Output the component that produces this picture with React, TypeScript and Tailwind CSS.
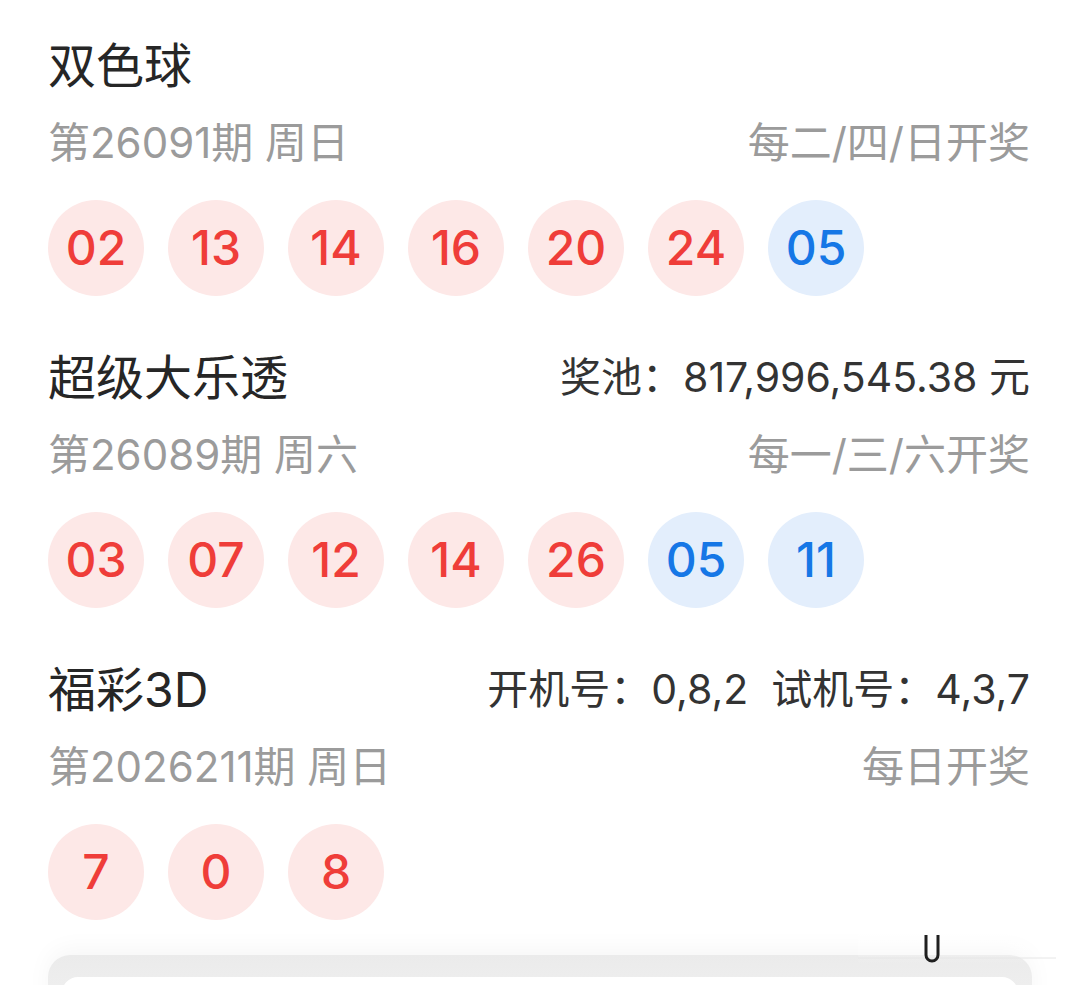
import React from 'react'

type Ball = { n: string; blue?: boolean }

type Draw = {
  name: string
  extra?: string
  issue: string
  schedule: string
  balls: Ball[]
}

const draws: Draw[] = [
  {
    name: '双色球',
    issue: '第26091期 周日',
    schedule: '每二/四/日开奖',
    balls: [
      { n: '02' },
      { n: '13' },
      { n: '14' },
      { n: '16' },
      { n: '20' },
      { n: '24' },
      { n: '05', blue: true },
    ],
  },
  {
    name: '超级大乐透',
    extra: '奖池：817,996,545.38 元',
    issue: '第26089期 周六',
    schedule: '每一/三/六开奖',
    balls: [
      { n: '03' },
      { n: '07' },
      { n: '12' },
      { n: '14' },
      { n: '26' },
      { n: '05', blue: true },
      { n: '11', blue: true },
    ],
  },
  {
    name: '福彩3D',
    extra: '开机号：0,8,2  试机号：4,3,7',
    issue: '第2026211期 周日',
    schedule: '每日开奖',
    balls: [{ n: '7' }, { n: '0' }, { n: '8' }],
  },
]

const font = { fontFamily: '"Inter", "Noto Sans CJK SC", sans-serif' }

function NumberBall({ n, blue }: Ball) {
  return (
    <div
      className={`w-[96px] h-[96px] rounded-full flex items-center justify-center text-[48px] font-medium ${
        blue ? 'bg-[#e3eefc] text-[#1677e6]' : 'bg-[#fde8e7] text-[#ef3d39]'
      }`}
    >
      {n}
    </div>
  )
}

function DrawBlock({ name, extra, issue, schedule, balls }: Draw) {
  return (
    <section>
      <div className="flex items-center justify-between h-[60px]">
        <h2 className="text-[48px] text-[#262626] whitespace-pre">{name}</h2>
        {extra && (
          <span className="text-[41px] text-[#333333] whitespace-pre">{extra}</span>
        )}
      </div>
      <div className="flex items-center justify-between h-[50px] mt-[21px] text-[42px] text-[#9b9b9b]">
        <span>{issue}</span>
        <span>{schedule}</span>
      </div>
      <div className="flex gap-[24px] mt-[33px]">
        {balls.map((b, i) => (
          <NumberBall key={i} {...b} />
        ))}
      </div>
    </section>
  )
}

export default function App() {
  return (
    <div className="relative w-[1080px] h-[985px] overflow-hidden bg-white" style={font}>
      <div className="pl-[48px] pr-[50px] pt-[36px] flex flex-col gap-[52px]">
        {draws.map((d) => (
          <DrawBlock key={d.name} {...d} />
        ))}
      </div>

      {/* next card peeking in at the bottom */}
      <div className="mx-[48px] mt-[35px] h-[80px] rounded-t-[22px] bg-gradient-to-b from-[#ebebeb] to-[#f3f3f3] shadow-[0_-6px_24px_rgba(0,0,0,0.04)] px-[14px] pt-[22px]">
        <div className="h-full rounded-t-[16px] bg-white" />
      </div>

      {/* scroll grip */}
      <div className="absolute left-[858px] top-[930px] w-[198px] h-[34px] bg-gradient-to-b from-white/60 to-white/0">
        <svg width="198" height="34" viewBox="0 0 198 34">
          <path d="M0 28 H198" stroke="#e6e6e6" strokeWidth="1" />
          <path
            d="M68 5 V25 a6 6 0 0 0 12 0 V5"
            fill="none"
            stroke="#1f1f1f"
            strokeWidth="3"
          />
        </svg>
      </div>
    </div>
  )
}
